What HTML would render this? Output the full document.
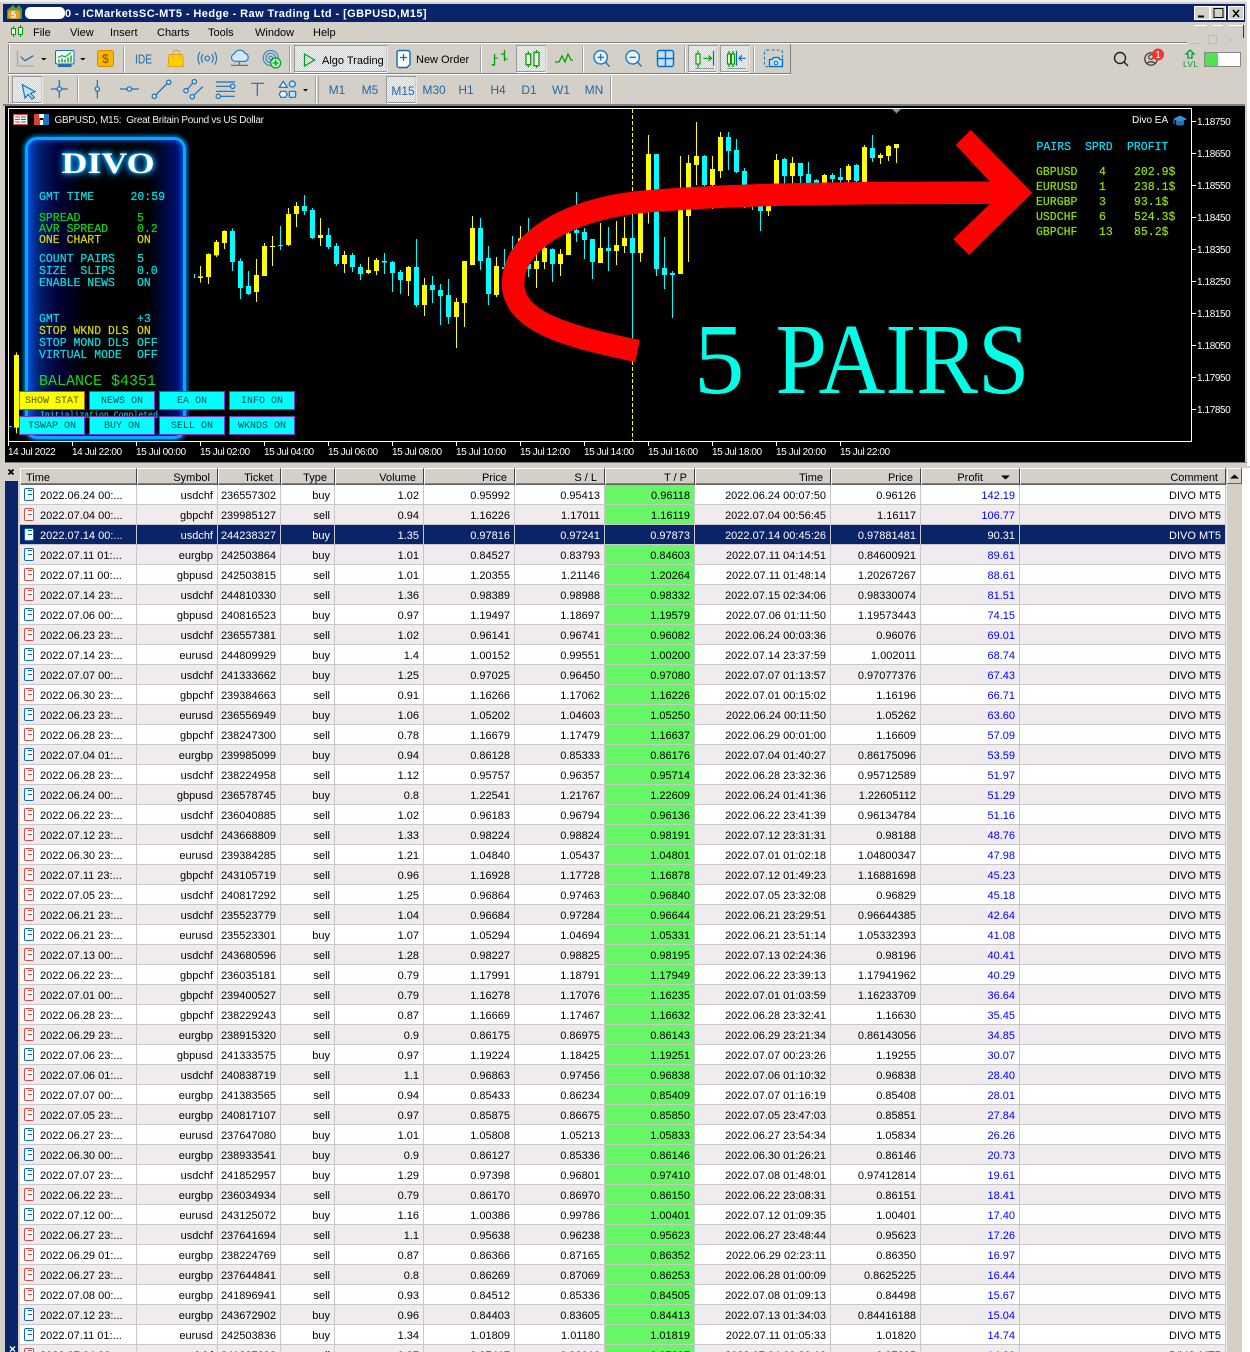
<!DOCTYPE html>
<html><head><meta charset="utf-8"><title>MT5</title>
<style>
html,body{margin:0;padding:0;background:#fff}
#w{position:relative;width:1250px;height:1352px;overflow:hidden;background:#fff;font-family:"Liberation Sans",sans-serif;font-size:11px;color:#000}
.a{position:absolute}
svg{position:absolute;left:0;top:0;overflow:visible}
svg text{white-space:pre}
.m{font-family:"Liberation Mono",monospace;font-size:11.5px;stroke-width:.2}
.u{font-family:"Liberation Sans",sans-serif;font-size:11px}
.tf{font-family:"Liberation Sans",sans-serif;font-size:12px;fill:#1f69aa;text-anchor:middle}
.ax{font-family:"Liberation Sans",sans-serif;font-size:10px;letter-spacing:-.4px;fill:#fff}
#panel{left:25px;top:137px;width:155px;height:296px;border:3px solid #00a8ff;border-radius:12px;box-shadow:0 0 5px 1px #0090ff,inset 0 0 7px #0060ff;background:linear-gradient(90deg,#0048c0 0,#001e70 12px,#000035 30px,#000 60px,#000 120px,#001070 150px,#0030a0 155px)}
#divo{left:37px;top:147px;width:142px;text-align:center;font:bold 30px "Liberation Serif",serif;color:#fff;line-height:34px;transform:scaleX(1.2);text-shadow:0 0 3px #00c8ff,0 0 6px #00a0ff,0 0 9px #0080ff}
.btn{position:absolute;width:64px;height:17px;border:1px solid #8a2be2;background:#0ff;font:10px/19px "Liberation Mono",monospace;text-align:center;color:#004f50;white-space:pre}
table{position:absolute;left:20px;top:468px;border-collapse:separate;border-spacing:0;table-layout:fixed;width:1206px;background:#fff}
th{height:17px;padding:3px 7px 0 0;box-sizing:border-box;font-weight:normal;font-size:11px;text-align:right;background:#d4d0c8;border-top:1px solid #fff;border-left:1px solid #fff;border-right:1px solid #404040;border-bottom:1px solid #606060;box-shadow:inset 0 -1px 0 #808080;line-height:12px;overflow:hidden}
th:first-child{text-align:left;padding-left:5px}
td{height:20px;box-sizing:border-box;padding:4px 4px 0 0;text-align:right;white-space:nowrap;overflow:hidden;border-right:1px solid #c8c8c8;border-bottom:1px solid #c8c8c8;line-height:15px;font-size:11px}
tr:nth-child(even) td{background:#efebef}
td:first-child{text-align:left;padding-left:20px;position:relative}
td:first-child::before{content:"";position:absolute;left:4px;top:3px;width:8px;height:11px;border:1.5px solid #0a6cc0;border-radius:2px;background:#fff}
td:first-child::after{content:"";position:absolute;left:8px;top:5px;width:4px;height:1px;background:#0a6cc0;box-shadow:0 4px 0 #0a6cc0}
tr.s td:first-child::before{border-color:#e8453c}
tr.s td:first-child::after{background:#e8453c;box-shadow:0 4px 0 #e8453c}
td:nth-child(8){background:#66f666!important}
td:nth-child(11){color:#00f}
tr.x td,tr.x td:nth-child(8){background:#0a246a!important;color:#fff}
</style></head><body><div id="w">

<div class="a" style="left:0;top:0;width:1247px;height:466px;background:#d4d0c8"></div>
<div class="a" style="left:0;top:466px;width:1250px;height:2px;background:#d4d0c8"></div>
<div class="a" style="left:0;top:0;width:1247px;height:2px;background:#efefef"></div>
<div class="a" style="left:3px;top:4px;width:1242px;height:18px;background:#0a246a"></div>
<div class="a" style="left:3px;top:104px;width:1242px;height:2px;background:#808080"></div>
<div class="a" style="left:5px;top:106px;width:1240px;height:356px;background:#000"></div>
<div class="a" style="left:5px;top:462px;width:1242px;height:1px;background:#808080"></div>
<div class="a" style="left:0;top:468px;width:20px;height:884px;background:#d4d0c8"></div>
<div class="a" style="left:5px;top:481px;width:13px;height:871px;background:#0a246a"></div>

<svg width="1250" height="106" viewBox="0 0 1250 106">
<defs><pattern id="d" width="2" height="2" patternUnits="userSpaceOnUse"><rect width="2" height="2" fill="#d4d0c8"/><rect width="1" height="1" fill="#f4f4f4"/><rect x="1" y="1" width="1" height="1" fill="#f4f4f4"/></pattern></defs>
<!-- title -->
<path d="M13 5l3 3 3-3 3 4v10H7V10z" fill="#4f9a3c"/><rect x="8" y="10" width="12" height="9" rx="3" fill="#e8a020"/><text x="11" y="18" style="font:bold 9px 'Liberation Sans',sans-serif" fill="#fff">5</text>
<rect x="25" y="7" width="40" height="12" rx="5" fill="#fff"/>
<text x="65" y="17" style="font:bold 11px 'Liberation Sans',sans-serif;letter-spacing:.42px" fill="#fff">0 - ICMarketsSC-MT5 - Hedge - Raw Trading Ltd - [GBPUSD,M15]</text>
<g fill="#d4d0c8" stroke="#fff"><rect x="1194.500" y="6.500" width="15" height="13"/><rect x="1210.500" y="6.500" width="15" height="13"/><rect x="1228.500" y="6.500" width="15" height="13"/></g>
<path d="M1198 16.500h6" stroke="#000" stroke-width="2"/><rect x="1214" y="8.500" width="9" height="9" fill="none" stroke="#000"/><path d="M1233 10l6 7M1239 10l-6 7" stroke="#000" stroke-width="1.500"/>
<!-- faded mdi -->
<path d="M1194 25.500h13M1212 25.500h11M1228 25.500h15" stroke="#fff"/><path d="M1243.500 25v13" stroke="#333"/>
<path d="M1190 43.500h10" stroke="#bbb"/><rect x="1208.500" y="35.500" width="8" height="8" fill="none" stroke="#bbb"/><path d="M1226 36l8 8M1234 36l-8 8" stroke="#c4c4c4" stroke-width="1.300"/>
<!-- menu -->
<g fill="none" stroke="#00a000"><path d="M13.500 26v11M20.500 25v12"/><rect x="11.500" y="28.500" width="4" height="6" fill="#fff"/><rect x="18.500" y="27.500" width="4" height="7" fill="#fff"/></g>
<g class="u"><text x="33" y="36">File</text><text x="70" y="36">View</text><text x="110" y="36">Insert</text><text x="157" y="36">Charts</text><text x="208" y="36">Tools</text><text x="255" y="36">Window</text><text x="313" y="36">Help</text></g>
<!-- toolbar lines -->
<path d="M8 42.500H1187" stroke="#808080"/><path d="M8 43.500H1187" stroke="#fff"/>
<path d="M8 73.500H790" stroke="#808080"/><path d="M8 74.500H790" stroke="#fff"/>
<path d="M790.500 44V74" stroke="#808080"/>
<path d="M8.500 44v28M8.500 76v27" stroke="#808080"/><path d="M9.500 44v28M9.500 76v27" stroke="#fff"/>
<g stroke="#a0a0a0"><path d="M123.500 46v27M289.500 46v27M480.500 46v27M582.500 46v27M684.500 46v27M753.500 46v27M77.500 77v25M315.500 76v27M318.500 76v27M610.500 76v27"/></g>
<g stroke="#fff"><path d="M124.500 46v27M290.500 46v27M481.500 46v27M583.500 46v27M685.500 46v27M754.500 46v27M78.500 77v25M316.500 76v27M611.500 76v27"/></g>
<!-- pressed buttons -->
<g stroke="#9a9a9a" fill="url(#d)"><rect x="294.500" y="45.500" width="92" height="26"/><rect x="516.500" y="45.500" width="29" height="26"/><rect x="688.500" y="45.500" width="28" height="26"/><rect x="720.500" y="45.500" width="28" height="26"/><rect x="12.500" y="76.500" width="29" height="26"/><rect x="386.500" y="76.500" width="29" height="26"/></g>
<g stroke="#fff" fill="none"><path d="M295 72.500h92V46M517 72.500h29V46M689 72.500h28V46M721 72.500h28V46M13 103.500h29V77M387 103.500h29V77"/></g>
<!-- row 1 icons -->
<path d="M17.500 50.500v15.500H34" fill="none" stroke="#a8a8a8" stroke-width="1.200"/><path d="M20.700 56.700l4.300 4 8.300-5" fill="none" stroke="#1a6fb5" stroke-width="1.200"/>
<path d="M41 58h5.500l-2.700 2.500zM80 58h5.500l-2.700 2.500zM303 89h5l-2.500 2.500z" fill="#000"/>
<rect x="55.500" y="50.500" width="18.500" height="13.500" rx="1.500" fill="#eaf7ff" stroke="#1a6fb5"/><path d="M59 62.500v-3M62 62.500v-4M65 62.500v-3M68 62.500v-5M71 62.500v-7" stroke="#00a000" stroke-width="1.300"/><path d="M58 57.500l4-2 3 1.500 6-4.500" fill="none" stroke="#00a000"/><path d="M58 65.800h13.500" stroke="#1a6fb5" stroke-width="2.500"/>
<rect x="97.500" y="50.500" width="16" height="16" rx="2" fill="#f9b800" stroke="#d88a00"/><text x="105.500" y="63" text-anchor="middle" style="font:bold 12.500px 'Liberation Sans',sans-serif" fill="#a86000">$</text>
<text x="135" y="63.300" textLength="17" lengthAdjust="spacingAndGlyphs" style="font:13px 'Liberation Sans',sans-serif" fill="#1a66ad">IDE</text>
<path d="M169 54.500h13.500l1 12h-15.500z" fill="#ffd000" stroke="#e0a020"/><path d="M172.800 58v-4.500a3.500 3.500 0 0 1 7 0V58" fill="none" stroke="#d8a030"/>
<g fill="none" stroke="#2a78bd" stroke-width="1.200"><circle cx="207.300" cy="58.300" r="2.300"/><path d="M203 54a6.500 6.500 0 0 0 0 8.600M211.600 54a6.500 6.500 0 0 1 0 8.600M200 52a11 11 0 0 0 0 12.600M214.600 52a11 11 0 0 1 0 12.600"/></g>
<path d="M235 61.300a3.800 3.800 0 0 1-.5-7.500 5.800 5.800 0 0 1 10.500-.5 4.200 4.200 0 0 1 .5 8z" fill="#cfeaff" stroke="#1a7ac5" stroke-width="1.200"/><path d="M239.300 61v4M231 65.300h17" stroke="#1a7ac5" stroke-width="1.200"/>
<g fill="none" stroke="#3a88c8" stroke-width="1.200"><circle cx="270.700" cy="58" r="7.500"/><circle cx="270.700" cy="58" r="4.700"/><circle cx="270.700" cy="58" r="1.800"/></g><circle cx="275.700" cy="63" r="5" fill="#b8f5c0" stroke="#00a030" stroke-width="1.200"/><path d="M275.700 60v6M272.700 63h6" stroke="#00a030" stroke-width="1.300"/>
<path d="M304.500 54l10 6-10 6z" fill="none" stroke="#00a030" stroke-width="1.300"/>
<text x="322" y="64" class="u">Algo Trading</text>
<path d="M399 50.500h9a2 2 0 0 1 2 2v12l-3 3h-8a2 2 0 0 1-2-2v-13a2 2 0 0 1 2-2z" fill="#fff" stroke="#0a6cc0" stroke-width="1.400"/><path d="M403.500 54v7M400 57.500h7" stroke="#0a6cc0" stroke-width="1.300"/>
<text x="416" y="63" class="u">New Order</text>
<path d="M494.500 54v11.700M491.700 64.700h2.800M494.500 58h3M504.500 50v11.300M501 54h3.500M504.500 59h3" fill="none" stroke="#00a000" stroke-width="1.300"/>
<g fill="none" stroke="#00a000" stroke-width="1.300"><path d="M528.300 51.300v16M536.500 50v18"/><rect x="526" y="54" width="4.700" height="10.700" fill="#fff"/><rect x="534" y="52.300" width="5" height="13.400" fill="#fff"/></g>
<path d="M555 62h4l3-6 3 6 3-8 3 6h2" fill="none" stroke="#00a000" stroke-width="1.300"/>
<g fill="none" stroke="#1a78c0" stroke-width="1.400"><circle cx="600.700" cy="57.300" r="6.700" fill="#e8f4ff"/><path d="M605.500 62l4 4.700"/><path d="M597.500 57.300h6.400M600.700 54v6.500"/><circle cx="632.700" cy="57.300" r="6.700" fill="#e8f4ff"/><path d="M637.500 62l4.200 4.700M629.500 57.300h6.400"/></g>
<rect x="657.500" y="50.500" width="16" height="16" rx="2" fill="#bfe3ff" stroke="#0a6cc0" stroke-width="1.400"/><path d="M665.500 51v15M658 58.500h15" stroke="#0a6cc0" stroke-width="1.400"/>
<g fill="none" stroke="#00a000" stroke-width="1.200"><path d="M698 50.700v17"/><rect x="696" y="54" width="4" height="10" fill="#fff"/><path d="M703.300 58.300h8M708.500 55.500l3 2.800-3 2.800"/></g>
<path d="M713.500 50.700v15" stroke="#0a6cc0" stroke-width="1.200" fill="none"/><path d="M695 68.500h19M727 68.500h19" stroke="#999"/>
<g fill="none" stroke="#00a000" stroke-width="1.200"><path d="M729 51v16M733 51v16"/><rect x="727.500" y="54" width="3" height="10" fill="#fff"/><rect x="731.500" y="54" width="3" height="10" fill="#fff"/></g>
<path d="M736.500 50.700v15" stroke="#0a6cc0" stroke-width="1.200"/><path d="M745.700 58.300h-6.400M742 55.500l-3 2.800 3 2.800" fill="none" stroke="#0a6cc0" stroke-width="1.200"/>
<rect x="764.500" y="50" width="18" height="16.700" rx="2" fill="none" stroke="#1a78c0" stroke-width="1.100" stroke-dasharray="3 2"/><path d="M769.500 59.500h2.500l1.500-2h5l1.500 2h2.500v7h-13z" fill="#bfe3ff" stroke="#0a6cc0" stroke-width="1.300"/><circle cx="776" cy="63" r="1.800" fill="none" stroke="#0a6cc0"/>
<!-- right icons -->
<g fill="none" stroke="#222" stroke-width="1.400"><circle cx="1120" cy="58" r="5.500"/><path d="M1124 62l4 4"/></g>
<g fill="none" stroke="#333" stroke-width="1.200"><circle cx="1151" cy="59" r="6.200"/><circle cx="1151" cy="57" r="2.300"/><path d="M1147 64c1-3 7-3 8 0"/></g>
<circle cx="1158" cy="54.500" r="6" fill="#e8392c"/><text x="1158" y="58" text-anchor="middle" style="font:10px 'Liberation Sans',sans-serif" fill="#fff">1</text>
<path d="M1190 50l4 4h-2v4h-4v-4h-2z" fill="none" stroke="#00a030" stroke-width="1.300"/><text x="1183" y="67" style="font:8.500px 'Liberation Sans',sans-serif;letter-spacing:.3px" fill="#00a030">LVL</text>
<rect x="1204.500" y="52.500" width="36" height="14" fill="#fff" stroke="#888"/><rect x="1205" y="53" width="13" height="13" fill="#4ee44e"/>
<!-- row 2 icons -->
<path d="M22.300 84.700L35 91.700l-4.500 1.800 4 4-2.500 1.500-4-4.500-3 3.500z" fill="#bfe3ff" stroke="#1a78c0" stroke-width="1.200"/>
<g fill="none" stroke="#1a6fb5" stroke-width="1.200">
<path d="M51 89h16.700M59.300 80v18"/><circle cx="59.300" cy="89" r="2.200" fill="#bfe3ff"/>
<path d="M97.300 80v18.300"/><circle cx="97.300" cy="89" r="2.200" fill="#bfe3ff"/>
<path d="M120 89h19"/><circle cx="129.300" cy="89" r="2.200" fill="#bfe3ff"/>
<path d="M156 94.700l11-11"/><circle cx="154.300" cy="96.300" r="2.200" fill="#bfe3ff"/><circle cx="168.700" cy="82.300" r="2.200" fill="#bfe3ff"/>
<path d="M187.500 89l5.500-6M194 95l8.700-8.300"/><circle cx="186" cy="90.700" r="2.200" fill="#bfe3ff"/><circle cx="194.300" cy="81.700" r="2.200" fill="#bfe3ff"/><circle cx="192.300" cy="96.700" r="2.200" fill="#bfe3ff"/>
<path d="M216 82h19M216 86.300h14.500M216 91.300h19M220.500 96.300h14.500"/><circle cx="232.700" cy="86.300" r="2.200" fill="#bfe3ff"/><circle cx="218.300" cy="96.300" r="2.200" fill="#bfe3ff"/>
<path d="M251 83.300h13M257.300 83.300v12.500"/>
<path d="M283.300 81.300l4 6h-8z" fill="#e8f4ff"/><circle cx="292.300" cy="84" r="3" fill="#bfe3ff"/><path d="M281 91.300h4.500l1.800 3-1.800 3h-4.500l-1.800-3z" fill="#e8f4ff"/><rect x="289.300" y="91.300" width="6.400" height="6" rx="1" fill="#bfe3ff"/>
</g>
<text class="tf" x="337" y="94">M1</text><text class="tf" x="370" y="94">M5</text><text class="tf" x="403" y="95">M15</text><text class="tf" x="434" y="94">M30</text><text class="tf" x="466" y="94">H1</text><text class="tf" x="498" y="94">H4</text><text class="tf" x="529" y="94">D1</text><text class="tf" x="561" y="94">W1</text><text class="tf" x="594" y="94">MN</text>
</svg>

<!-- chart -->
<svg width="1250" height="466" viewBox="0 0 1250 466">
<path d="M8.500 108.500H1191.500V441.500H8.500z" fill="none" stroke="#fff"/>
<path d="M632.500 109V441" stroke="#ff0" stroke-dasharray="4 2"/>
<path d="M892 109h9l-4.500 4.500z" fill="#7d8d9d"/>
<path d="M1191 121.500h5M1191 153.500h5M1191 185.500h5M1191 217.500h5M1191 249.500h5M1191 281.500h5M1191 313.500h5M1191 345.500h5M1191 377.500h5M1191 409.500h5" stroke="#fff"/>
<path d="M8.500 441v5M72.500 441v5M136.500 441v5M200.500 441v5M264.500 441v5M328.500 441v5M392.500 441v5M456.500 441v5M520.500 441v5M584.500 441v5M648.500 441v5M712.500 441v5M776.500 441v5M840.500 441v5" stroke="#fff"/>
<g class="ax"><text x="1197" y="125">1.18750</text><text x="1197" y="157">1.18650</text><text x="1197" y="189">1.18550</text><text x="1197" y="221">1.18450</text><text x="1197" y="253">1.18350</text><text x="1197" y="285">1.18250</text><text x="1197" y="317">1.18150</text><text x="1197" y="349">1.18050</text><text x="1197" y="381">1.17950</text><text x="1197" y="413">1.17850</text>
<text x="8" y="455">14 Jul 2022</text><text x="72" y="455">14 Jul 22:00</text><text x="136" y="455">15 Jul 00:00</text><text x="200" y="455">15 Jul 02:00</text><text x="264" y="455">15 Jul 04:00</text><text x="328" y="455">15 Jul 06:00</text><text x="392" y="455">15 Jul 08:00</text><text x="456" y="455">15 Jul 10:00</text><text x="520" y="455">15 Jul 12:00</text><text x="584" y="455">15 Jul 14:00</text><text x="648" y="455">15 Jul 16:00</text><text x="712" y="455">15 Jul 18:00</text><text x="776" y="455">15 Jul 20:00</text><text x="840" y="455">15 Jul 22:00</text></g>
<g transform="translate(0,105) scale(1,.33333)" fill="none">
<path stroke="#ff0" stroke-width="1" d="M16.500 742V985M200.500 483V533M208.500 445V537M216.500 405V456M224.500 376V432M256.500 462V591M264.500 414V513M272.500 393V483M288.500 309V423M296.500 291V366M320.500 339V423M344.500 438V504M368.500 456V507M376.500 459V510M408.500 483V573M424.500 519V633M456.500 579V729M464.500 468V666M472.500 333V480M496.500 456V576M520.500 363V420M536.500 430V549M544.500 420V492M560.500 432V513M568.500 360V450M600.500 354V474M616.500 348V480M624.500 336V444M640.500 300V471M648.500 90V356M680.500 153V507M688.500 150V471M696.500 51V240M712.500 153V312M720.500 81V219M768.500 260V333M776.500 147V240M792.500 156V240M824.500 207V300M848.500 177V240M864.500 120V240M880.500 144V177M888.500 120V168M896.500 117V174"/>
<path stroke="#ff0" stroke-width="5" d="M16.500 750V968M200.500 514V519M208.500 447V516M216.500 411V451M224.500 378V414M256.500 510V561M264.500 423V513M272.500 423V426M288.500 327V420M296.500 303V327M320.500 390V399M344.500 450V477M368.500 495V504M376.500 465V498M408.500 486V528M424.500 540V600M456.500 591V636M464.500 468V594M472.500 369V480M496.500 483V570M520.500 400V440M536.500 468V492M544.500 429V471M560.500 447V477M568.500 385V450M600.500 429V474M616.500 420V438M624.500 399V423M640.500 300V444M648.500 147V300M680.500 285V507M688.500 174V333M696.500 153V180M712.500 192V240M720.500 96V198M768.500 295V318M776.500 165V240M792.500 174V213M824.500 210V240M848.500 183V225M864.500 126V240M880.500 150V159M888.500 123V153M896.500 117V129"/>
<path stroke="#0ff" stroke-width="1" d="M194.500 507V519M232.500 370V498M240.500 460V582M248.500 498V570M280.500 363V435M304.500 270V330M312.500 309V402M328.500 369V432M336.500 414V483M352.500 444V501M360.500 477V525M384.500 444V507M392.500 468V561M400.500 495V567M416.500 402V606M432.500 513V594M440.500 537V660M448.500 522V657M480.500 339V495M488.500 423V600M504.500 432V492M512.500 393V480M528.500 339V516M552.500 430V531M576.500 261V411M584.500 369V462M592.500 402V522M608.500 366V498M632.500 330V702M656.500 147V513M664.500 396V552M672.500 498V639M704.500 150V309M728.500 81V195M736.500 102V204M744.500 189V309M752.500 285V315M760.500 270V378M784.500 159V240M800.500 174V240M808.500 171V240M816.500 222V240M832.500 204V240M840.500 189V240M856.500 177V240M872.500 90V171"/>
<path stroke="#0ff" stroke-width="5" d="M232.500 378V471M240.500 468V549M248.500 543V567M280.500 420V423M304.500 303V318M312.500 315V399M328.500 390V426M336.500 423V477M352.500 450V486M360.500 486V507M384.500 468V473M392.500 471V504M400.500 501V525M416.500 486V600M432.500 540V555M440.500 555V573M448.500 570V636M480.500 369V468M488.500 459V567M504.500 486V492M528.500 477V492M552.500 432V477M576.500 375V384M584.500 381V405M592.500 402V471M608.500 429V438M632.500 399V444M656.500 147V492M664.500 489V510M672.500 504V510M704.500 153V240M728.500 96V138M736.500 135V201M744.500 198V240M752.500 295V303M760.500 295V318M784.500 162V213M800.500 174V213M808.500 207V240M816.500 225V240M832.500 210V222M840.500 216V225M856.500 180V228M872.500 129V159"/>
<path stroke="#0ff" stroke-width="3" d="M10 963V966"/>
</g>
</svg>

<div class="a" id="panel"></div>
<div class="a" id="divo">DIVO</div>

<svg width="1250" height="466" viewBox="0 0 1250 466">
<!-- chart head -->
<rect x="13.500" y="114.500" width="14" height="10" fill="#fff" stroke="#e04030"/><path d="M15 117h5M15 119.500h5M15 122h5" stroke="#e04030"/><path d="M21 117h5M21 119.500h5M21 122h5" stroke="#2060c0"/>
<rect x="34" y="114" width="6" height="11" fill="#e04030"/><rect x="43" y="114" width="6" height="11" fill="#1a78c0"/><rect x="39" y="114" width="5" height="4" fill="#fff"/><rect x="40" y="120" width="3" height="5" fill="#fff"/>
<text x="54.500" y="123" textLength="209.500" style="font:10px 'Liberation Sans',sans-serif" fill="#eee">GBPUSD, M15:  Great Britain Pound vs US Dollar</text>
<text x="1132" y="123" style="font:10px 'Liberation Sans',sans-serif" fill="#fff">Divo EA</text>
<path d="M1173 119l7-3.500 7 3.500-7 3.500z" fill="#3a90d8"/><path d="M1176 121v3.500c2 1.500 6 1.500 8 0V121" fill="#2070b8"/><path d="M1174 120v4" stroke="#3a90d8"/>
<!-- panel text -->
<g class="m" fill="#00e0e0" stroke="#00e0e0">
<text x="39" y="200">GMT TIME</text><text x="130.500" y="200">20:59</text>
<text x="39" y="262">COUNT PAIRS</text><text x="137" y="262">5</text>
<text x="39" y="274">SIZE  SLIPS</text><text x="137" y="274">0.0</text>
<text x="39" y="286">ENABLE NEWS</text><text x="137" y="286">ON</text>
<text x="39" y="322">GMT</text><text x="137" y="322">+3</text>
<text x="39" y="346">STOP MOND DLS</text><text x="137" y="346">OFF</text>
<text x="39" y="358">VIRTUAL MODE</text><text x="137" y="358">OFF</text>
</g>
<g class="m" fill="#10d810" stroke="#10d810">
<text x="39" y="221">SPREAD</text><text x="137" y="221">5</text>
<text x="39" y="232">AVR SPREAD</text><text x="137" y="232">0.2</text>
</g>
<g class="m" fill="#d8d800" stroke="#d8d800">
<text x="39" y="243">ONE CHART</text><text x="137" y="243">ON</text>
<text x="39" y="334">STOP WKND DLS</text><text x="137" y="334">ON</text>
</g>
<text x="39" y="385" style="font:15px 'Liberation Mono',monospace" fill="#10e010">BALANCE $4351</text>
<text x="40" y="418" textLength="118" lengthAdjust="spacingAndGlyphs" style="font:10px 'Liberation Mono',monospace" fill="#00e0e0">Initialization Completed</text>
<!-- right table -->
<g class="m" fill="#00e0ff" stroke="#00e0ff"><text x="1036.500" y="150">PAIRS</text><text x="1085" y="150">SPRD</text><text x="1127" y="150">PROFIT</text></g>
<g class="m" fill="#90e000" stroke="#90e000">
<text x="1036" y="175">GBPUSD</text><text x="1099" y="175">4</text><text x="1134" y="175">202.9$</text>
<text x="1036" y="190">EURUSD</text><text x="1099" y="190">1</text><text x="1134" y="190">238.1$</text>
<text x="1036" y="205">EURGBP</text><text x="1099" y="205">3</text><text x="1134" y="205">93.1$</text>
<text x="1036" y="220">USDCHF</text><text x="1099" y="220">6</text><text x="1134" y="220">524.3$</text>
<text x="1036" y="235">GBPCHF</text><text x="1099" y="235">13</text><text x="1134" y="235">85.2$</text>
</g>
<!-- arrow -->
<path d="M637.500 351C560 335 513 320 513 283C513 243 565 210 640 202C720 195 820 192.500 992 192.700" fill="none" stroke="#f00" stroke-width="22.500"/>
<path d="M970.700 130L955.700 145L990 181.700V203.700L953.300 239.300L969 255L1032.300 192.700z" fill="#f00"/>
<text x="694" y="393" style="font:101px 'Liberation Serif',serif" fill="#00ffe6">5</text>
<text x="775.500" y="393" textLength="254" lengthAdjust="spacingAndGlyphs" style="font:101px 'Liberation Serif',serif" fill="#00ffe6">PAIRS</text>
</svg>

<div class="btn" style="left:19px;top:391px;background:#ff0;border-color:#b06000;color:#5a5000">SHOW STAT</div>
<div class="btn" style="left:89px;top:391px">NEWS ON</div>
<div class="btn" style="left:159px;top:391px">EA ON</div>
<div class="btn" style="left:229px;top:391px">INFO ON</div>
<div class="btn" style="left:19px;top:416px">TSWAP ON</div>
<div class="btn" style="left:89px;top:416px">BUY ON</div>
<div class="btn" style="left:159px;top:416px">SELL ON</div>
<div class="btn" style="left:229px;top:416px">WKNDS ON</div>

<!-- bottom panel -->
<svg width="1250" height="1352" viewBox="0 0 1250 1352">
<path d="M8.500 469.500l5 5M13.500 469.500l-5 5" stroke="#000" stroke-width="1.800"/>
<path d="M10 1346.500l5 5M15 1346.500l-5 5" stroke="#fff" stroke-width="1.300"/>
</svg>
<table>
<colgroup><col style="width:117px"><col style="width:81px"><col style="width:63px"><col style="width:54px"><col style="width:89px"><col style="width:91px"><col style="width:90px"><col style="width:90px"><col style="width:136px"><col style="width:90px"><col style="width:99px"><col style="width:206px"></colgroup>
<thead><tr><th>Time</th><th>Symbol</th><th>Ticket</th><th>Type</th><th>Volume</th><th>Price</th><th>S / L</th><th>T / P</th><th>Time</th><th>Price</th><th style="padding-right:36px">Profit</th><th>Comment</th></tr></thead>
<tbody>
<tr class="b"><td>2022.06.24 00:...</td><td>usdchf</td><td>236557302</td><td>buy</td><td>1.02</td><td>0.95992</td><td>0.95413</td><td>0.96118</td><td>2022.06.24 00:07:50</td><td>0.96126</td><td>142.19</td><td>DIVO MT5</td></tr>
<tr class="s"><td>2022.07.04 00:...</td><td>gbpchf</td><td>239985127</td><td>sell</td><td>0.94</td><td>1.16226</td><td>1.17011</td><td>1.16119</td><td>2022.07.04 00:56:45</td><td>1.16117</td><td>106.77</td><td>DIVO MT5</td></tr>
<tr class="b x"><td>2022.07.14 00:...</td><td>usdchf</td><td>244238327</td><td>buy</td><td>1.35</td><td>0.97816</td><td>0.97241</td><td>0.97873</td><td>2022.07.14 00:45:26</td><td>0.97881481</td><td>90.31</td><td>DIVO MT5</td></tr>
<tr class="b"><td>2022.07.11 01:...</td><td>eurgbp</td><td>242503864</td><td>buy</td><td>1.01</td><td>0.84527</td><td>0.83793</td><td>0.84603</td><td>2022.07.11 04:14:51</td><td>0.84600921</td><td>89.61</td><td>DIVO MT5</td></tr>
<tr class="s"><td>2022.07.11 00:...</td><td>gbpusd</td><td>242503815</td><td>sell</td><td>1.01</td><td>1.20355</td><td>1.21146</td><td>1.20264</td><td>2022.07.11 01:48:14</td><td>1.20267267</td><td>88.61</td><td>DIVO MT5</td></tr>
<tr class="s"><td>2022.07.14 23:...</td><td>usdchf</td><td>244810330</td><td>sell</td><td>1.36</td><td>0.98389</td><td>0.98988</td><td>0.98332</td><td>2022.07.15 02:34:06</td><td>0.98330074</td><td>81.51</td><td>DIVO MT5</td></tr>
<tr class="b"><td>2022.07.06 00:...</td><td>gbpusd</td><td>240816523</td><td>buy</td><td>0.97</td><td>1.19497</td><td>1.18697</td><td>1.19579</td><td>2022.07.06 01:11:50</td><td>1.19573443</td><td>74.15</td><td>DIVO MT5</td></tr>
<tr class="s"><td>2022.06.23 23:...</td><td>usdchf</td><td>236557381</td><td>sell</td><td>1.02</td><td>0.96141</td><td>0.96741</td><td>0.96082</td><td>2022.06.24 00:03:36</td><td>0.96076</td><td>69.01</td><td>DIVO MT5</td></tr>
<tr class="b"><td>2022.07.14 23:...</td><td>eurusd</td><td>244809929</td><td>buy</td><td>1.4</td><td>1.00152</td><td>0.99551</td><td>1.00200</td><td>2022.07.14 23:37:59</td><td>1.002011</td><td>68.74</td><td>DIVO MT5</td></tr>
<tr class="b"><td>2022.07.07 00:...</td><td>usdchf</td><td>241333662</td><td>buy</td><td>1.25</td><td>0.97025</td><td>0.96450</td><td>0.97080</td><td>2022.07.07 01:13:57</td><td>0.97077376</td><td>67.43</td><td>DIVO MT5</td></tr>
<tr class="s"><td>2022.06.30 23:...</td><td>gbpchf</td><td>239384663</td><td>sell</td><td>0.91</td><td>1.16266</td><td>1.17062</td><td>1.16226</td><td>2022.07.01 00:15:02</td><td>1.16196</td><td>66.71</td><td>DIVO MT5</td></tr>
<tr class="b"><td>2022.06.23 23:...</td><td>eurusd</td><td>236556949</td><td>buy</td><td>1.06</td><td>1.05202</td><td>1.04603</td><td>1.05250</td><td>2022.06.24 00:11:50</td><td>1.05262</td><td>63.60</td><td>DIVO MT5</td></tr>
<tr class="s"><td>2022.06.28 23:...</td><td>gbpchf</td><td>238247300</td><td>sell</td><td>0.78</td><td>1.16679</td><td>1.17479</td><td>1.16637</td><td>2022.06.29 00:01:00</td><td>1.16609</td><td>57.09</td><td>DIVO MT5</td></tr>
<tr class="b"><td>2022.07.04 01:...</td><td>eurgbp</td><td>239985099</td><td>buy</td><td>0.94</td><td>0.86128</td><td>0.85333</td><td>0.86176</td><td>2022.07.04 01:40:27</td><td>0.86175096</td><td>53.59</td><td>DIVO MT5</td></tr>
<tr class="s"><td>2022.06.28 23:...</td><td>usdchf</td><td>238224958</td><td>sell</td><td>1.12</td><td>0.95757</td><td>0.96357</td><td>0.95714</td><td>2022.06.28 23:32:36</td><td>0.95712589</td><td>51.97</td><td>DIVO MT5</td></tr>
<tr class="b"><td>2022.06.24 00:...</td><td>gbpusd</td><td>236578745</td><td>buy</td><td>0.8</td><td>1.22541</td><td>1.21767</td><td>1.22609</td><td>2022.06.24 01:41:36</td><td>1.22605112</td><td>51.29</td><td>DIVO MT5</td></tr>
<tr class="s"><td>2022.06.22 23:...</td><td>usdchf</td><td>236040885</td><td>sell</td><td>1.02</td><td>0.96183</td><td>0.96794</td><td>0.96136</td><td>2022.06.22 23:41:39</td><td>0.96134784</td><td>51.16</td><td>DIVO MT5</td></tr>
<tr class="s"><td>2022.07.12 23:...</td><td>usdchf</td><td>243668809</td><td>sell</td><td>1.33</td><td>0.98224</td><td>0.98824</td><td>0.98191</td><td>2022.07.12 23:31:31</td><td>0.98188</td><td>48.76</td><td>DIVO MT5</td></tr>
<tr class="s"><td>2022.06.30 23:...</td><td>eurusd</td><td>239384285</td><td>sell</td><td>1.21</td><td>1.04840</td><td>1.05437</td><td>1.04801</td><td>2022.07.01 01:02:18</td><td>1.04800347</td><td>47.98</td><td>DIVO MT5</td></tr>
<tr class="s"><td>2022.07.11 23:...</td><td>gbpchf</td><td>243105719</td><td>sell</td><td>0.96</td><td>1.16928</td><td>1.17728</td><td>1.16878</td><td>2022.07.12 01:49:23</td><td>1.16881698</td><td>45.23</td><td>DIVO MT5</td></tr>
<tr class="s"><td>2022.07.05 23:...</td><td>usdchf</td><td>240817292</td><td>sell</td><td>1.25</td><td>0.96864</td><td>0.97463</td><td>0.96840</td><td>2022.07.05 23:32:08</td><td>0.96829</td><td>45.18</td><td>DIVO MT5</td></tr>
<tr class="s"><td>2022.06.21 23:...</td><td>usdchf</td><td>235523779</td><td>sell</td><td>1.04</td><td>0.96684</td><td>0.97284</td><td>0.96644</td><td>2022.06.21 23:29:51</td><td>0.96644385</td><td>42.64</td><td>DIVO MT5</td></tr>
<tr class="b"><td>2022.06.21 23:...</td><td>eurusd</td><td>235523301</td><td>buy</td><td>1.07</td><td>1.05294</td><td>1.04694</td><td>1.05331</td><td>2022.06.21 23:51:14</td><td>1.05332393</td><td>41.08</td><td>DIVO MT5</td></tr>
<tr class="s"><td>2022.07.13 00:...</td><td>usdchf</td><td>243680596</td><td>sell</td><td>1.28</td><td>0.98227</td><td>0.98825</td><td>0.98195</td><td>2022.07.13 02:24:36</td><td>0.98196</td><td>40.41</td><td>DIVO MT5</td></tr>
<tr class="s"><td>2022.06.22 23:...</td><td>gbpchf</td><td>236035181</td><td>sell</td><td>0.79</td><td>1.17991</td><td>1.18791</td><td>1.17949</td><td>2022.06.22 23:39:13</td><td>1.17941962</td><td>40.29</td><td>DIVO MT5</td></tr>
<tr class="s"><td>2022.07.01 00:...</td><td>gbpchf</td><td>239400527</td><td>sell</td><td>0.79</td><td>1.16278</td><td>1.17076</td><td>1.16235</td><td>2022.07.01 01:03:59</td><td>1.16233709</td><td>36.64</td><td>DIVO MT5</td></tr>
<tr class="s"><td>2022.06.28 23:...</td><td>gbpchf</td><td>238229243</td><td>sell</td><td>0.87</td><td>1.16669</td><td>1.17467</td><td>1.16632</td><td>2022.06.28 23:32:41</td><td>1.16630</td><td>35.45</td><td>DIVO MT5</td></tr>
<tr class="s"><td>2022.06.29 23:...</td><td>eurgbp</td><td>238915320</td><td>sell</td><td>0.9</td><td>0.86175</td><td>0.86975</td><td>0.86143</td><td>2022.06.29 23:21:34</td><td>0.86143056</td><td>34.85</td><td>DIVO MT5</td></tr>
<tr class="b"><td>2022.07.06 23:...</td><td>gbpusd</td><td>241333575</td><td>buy</td><td>0.97</td><td>1.19224</td><td>1.18425</td><td>1.19251</td><td>2022.07.07 00:23:26</td><td>1.19255</td><td>30.07</td><td>DIVO MT5</td></tr>
<tr class="s"><td>2022.07.06 01:...</td><td>usdchf</td><td>240838719</td><td>sell</td><td>1.1</td><td>0.96863</td><td>0.97456</td><td>0.96838</td><td>2022.07.06 01:10:32</td><td>0.96838</td><td>28.40</td><td>DIVO MT5</td></tr>
<tr class="s"><td>2022.07.07 00:...</td><td>eurgbp</td><td>241383565</td><td>sell</td><td>0.94</td><td>0.85433</td><td>0.86234</td><td>0.85409</td><td>2022.07.07 01:16:19</td><td>0.85408</td><td>28.01</td><td>DIVO MT5</td></tr>
<tr class="s"><td>2022.07.05 23:...</td><td>eurgbp</td><td>240817107</td><td>sell</td><td>0.97</td><td>0.85875</td><td>0.86675</td><td>0.85850</td><td>2022.07.05 23:47:03</td><td>0.85851</td><td>27.84</td><td>DIVO MT5</td></tr>
<tr class="b"><td>2022.06.27 23:...</td><td>eurusd</td><td>237647080</td><td>buy</td><td>1.01</td><td>1.05808</td><td>1.05213</td><td>1.05833</td><td>2022.06.27 23:54:34</td><td>1.05834</td><td>26.26</td><td>DIVO MT5</td></tr>
<tr class="b"><td>2022.06.30 00:...</td><td>eurgbp</td><td>238933541</td><td>buy</td><td>0.9</td><td>0.86127</td><td>0.85336</td><td>0.86146</td><td>2022.06.30 01:26:21</td><td>0.86146</td><td>20.73</td><td>DIVO MT5</td></tr>
<tr class="b"><td>2022.07.07 23:...</td><td>usdchf</td><td>241852957</td><td>buy</td><td>1.29</td><td>0.97398</td><td>0.96801</td><td>0.97410</td><td>2022.07.08 01:48:01</td><td>0.97412814</td><td>19.61</td><td>DIVO MT5</td></tr>
<tr class="s"><td>2022.06.22 23:...</td><td>eurgbp</td><td>236034934</td><td>sell</td><td>0.79</td><td>0.86170</td><td>0.86970</td><td>0.86150</td><td>2022.06.22 23:08:31</td><td>0.86151</td><td>18.41</td><td>DIVO MT5</td></tr>
<tr class="b"><td>2022.07.12 00:...</td><td>eurusd</td><td>243125072</td><td>buy</td><td>1.16</td><td>1.00386</td><td>0.99786</td><td>1.00401</td><td>2022.07.12 01:09:35</td><td>1.00401</td><td>17.40</td><td>DIVO MT5</td></tr>
<tr class="s"><td>2022.06.27 23:...</td><td>usdchf</td><td>237641694</td><td>sell</td><td>1.1</td><td>0.95638</td><td>0.96238</td><td>0.95623</td><td>2022.06.27 23:48:44</td><td>0.95623</td><td>17.26</td><td>DIVO MT5</td></tr>
<tr class="s"><td>2022.06.29 01:...</td><td>eurgbp</td><td>238224769</td><td>sell</td><td>0.87</td><td>0.86366</td><td>0.87165</td><td>0.86352</td><td>2022.06.29 02:23:11</td><td>0.86350</td><td>16.97</td><td>DIVO MT5</td></tr>
<tr class="s"><td>2022.06.27 23:...</td><td>eurgbp</td><td>237644841</td><td>sell</td><td>0.8</td><td>0.86269</td><td>0.87069</td><td>0.86253</td><td>2022.06.28 01:00:09</td><td>0.8625225</td><td>16.44</td><td>DIVO MT5</td></tr>
<tr class="s"><td>2022.07.08 00:...</td><td>eurgbp</td><td>241896941</td><td>sell</td><td>0.93</td><td>0.84512</td><td>0.85336</td><td>0.84505</td><td>2022.07.08 01:09:13</td><td>0.84498</td><td>15.67</td><td>DIVO MT5</td></tr>
<tr class="b"><td>2022.07.12 23:...</td><td>eurgbp</td><td>243672902</td><td>buy</td><td>0.96</td><td>0.84403</td><td>0.83605</td><td>0.84413</td><td>2022.07.13 01:34:03</td><td>0.84416188</td><td>15.04</td><td>DIVO MT5</td></tr>
<tr class="b"><td>2022.07.11 01:...</td><td>eurusd</td><td>242503836</td><td>buy</td><td>1.34</td><td>1.01809</td><td>1.01180</td><td>1.01819</td><td>2022.07.11 01:05:33</td><td>1.01820</td><td>14.74</td><td>DIVO MT5</td></tr>
<tr class="s"><td>2022.07.04 00:...</td><td>usdchf</td><td>241887393</td><td>sell</td><td>0.97</td><td>0.97417</td><td>0.98016</td><td>0.97397</td><td>2022.07.04 00:30:12</td><td>0.97395</td><td>14.20</td><td>DIVO MT5</td></tr>
</tbody></table>
<svg width="1250" height="1352" viewBox="0 0 1250 1352" style="pointer-events:none">
<path d="M1001 475.500h9l-4.500 4z" fill="#000"/>
<rect x="1226" y="468" width="16" height="884" fill="#d4d0c8"/><path d="M1226.500 484v868" stroke="#eee"/>
<rect x="1227.500" y="468.500" width="14" height="15" fill="#d4d0c8" stroke="#fff"/><path d="M1227 483.500h15M1241.500 468v16" stroke="#606060"/>
<path d="M1230 478.500h9l-4.500-4z" fill="#000"/>
</svg>
</div></body></html>
